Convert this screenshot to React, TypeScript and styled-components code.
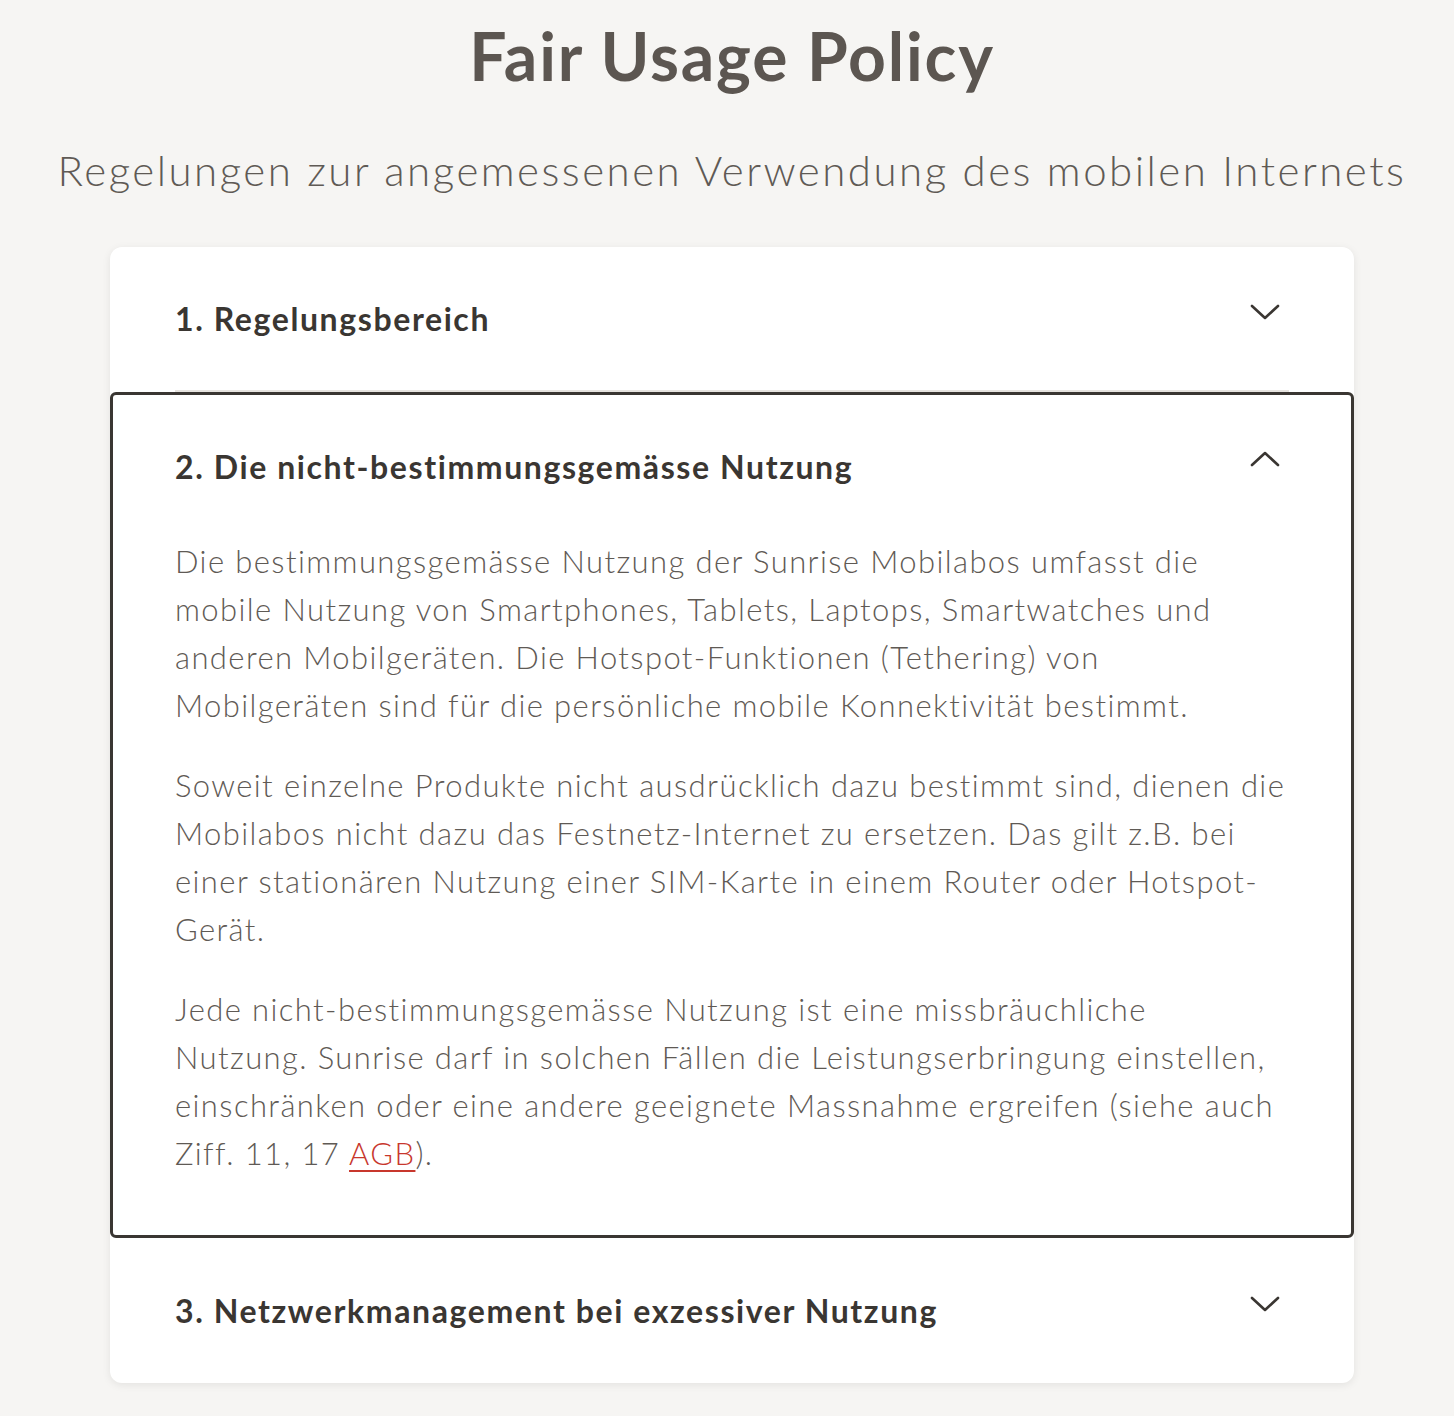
import React from "react";
import styled, { createGlobalStyle } from "styled-components";

const Global = createGlobalStyle`
  html, body { margin: 0; padding: 0; background: #f6f5f3; }
  body { font-family: Lato, "Noto Sans", "Liberation Sans", sans-serif; }
`;

const Page = styled.main`
  display: flex;
  flex-direction: column;
  align-items: center;
  padding: 14px 0 32px 10px;
`;

const Title = styled.h1`
  margin: 0;
  font-size: 66px;
  line-height: 84px;
  font-weight: 700;
  color: #5c5651;
  letter-spacing: 1.8px;
`;

const Subtitle = styled.p`
  margin: 44px 0 0;
  font-size: 42px;
  line-height: 56px;
  font-weight: 300;
  color: #5f5a55;
  letter-spacing: 2.5px;
`;

const Card = styled.section`
  margin-top: 49px;
  width: 1244px;
  background: #fff;
  border-radius: 12px;
  box-shadow: 0 2px 8px rgba(0, 0, 0, 0.08);
  display: flex;
  flex-direction: column;
`;

const Item = styled.div<{ $open?: boolean }>`
  border: ${(p) => (p.$open ? "3px solid #3a3632" : "none")};
  border-radius: 6px;
  padding: ${(p) => (p.$open ? "0 62px" : "0 65px")};
`;

const Header = styled.div<{ $divider?: boolean; $h: number }>`
  display: flex;
  align-items: center;
  justify-content: space-between;
  height: ${(p) => p.$h}px;
  border-bottom: ${(p) => (p.$divider ? "2px solid #e6e3df" : "none")};
`;

const HeaderText = styled.h2`
  margin: 0;
  font-size: 32px;
  font-weight: 700;
  color: #3a3632;
  letter-spacing: 1.6px;
`;

const Chevron = styled.svg`
  width: 30px;
  height: 18px;
  margin-right: 9px;
  margin-bottom: 14px;
  flex-shrink: 0;
`;

const Body = styled.div`
  padding: 0 0 58px;
  display: flex;
  flex-direction: column;
  gap: 32px;
`;

const Para = styled.p`
  margin: 0;
  font-size: 31px;
  line-height: 48px;
  font-weight: 300;
  color: #5f5a55;
  letter-spacing: 1.4px;
  white-space: nowrap;
`;

const Link = styled.a`
  color: #c8372d;
  text-decoration: underline;
  text-underline-offset: 5px;
  text-decoration-thickness: 2px;
`;

const Down = () => (
  <Chevron viewBox="0 0 30 18" fill="none">
    <path d="M2 3 L15 15 L28 3" stroke="#3a3632" strokeWidth="2.6" strokeLinecap="round" strokeLinejoin="round" />
  </Chevron>
);

const Up = () => (
  <Chevron viewBox="0 0 30 18" fill="none">
    <path d="M2 15 L15 3 L28 15" stroke="#3a3632" strokeWidth="2.6" strokeLinecap="round" strokeLinejoin="round" />
  </Chevron>
);

export default function App() {
  return (
    <>
      <Global />
      <Page>
        <Title>Fair Usage Policy</Title>
        <Subtitle>Regelungen zur angemessenen Verwendung des mobilen Internets</Subtitle>
        <Card>
          <Item>
            <Header $h={143} $divider>
              <HeaderText>1. Regelungsbereich</HeaderText>
              <Down />
            </Header>
          </Item>
          <Item $open>
            <Header $h={142}>
              <HeaderText>2. Die nicht-bestimmungsgemässe Nutzung</HeaderText>
              <Up />
            </Header>
            <Body>
              <Para>
                Die bestimmungsgemässe Nutzung der Sunrise Mobilabos umfasst die
                <br />
                mobile Nutzung von Smartphones, Tablets, Laptops, Smartwatches und
                <br />
                anderen Mobilgeräten. Die Hotspot-Funktionen (Tethering) von
                <br />
                Mobilgeräten sind für die persönliche mobile Konnektivität bestimmt.
              </Para>
              <Para>
                Soweit einzelne Produkte nicht ausdrücklich dazu bestimmt sind, dienen die
                <br />
                Mobilabos nicht dazu das Festnetz-Internet zu ersetzen. Das gilt z.B. bei
                <br />
                einer stationären Nutzung einer SIM-Karte in einem Router oder Hotspot-
                <br />
                Gerät.
              </Para>
              <Para>
                Jede nicht-bestimmungsgemässe Nutzung ist eine missbräuchliche
                <br />
                Nutzung. Sunrise darf in solchen Fällen die Leistungserbringung einstellen,
                <br />
                einschränken oder eine andere geeignete Massnahme ergreifen (siehe auch
                <br />
                Ziff. 11, 17 <Link href="#">AGB</Link>).
              </Para>
            </Body>
          </Item>
          <Item>
            <Header $h={145}>
              <HeaderText>3. Netzwerkmanagement bei exzessiver Nutzung</HeaderText>
              <Down />
            </Header>
          </Item>
        </Card>
      </Page>
    </>
  );
}
